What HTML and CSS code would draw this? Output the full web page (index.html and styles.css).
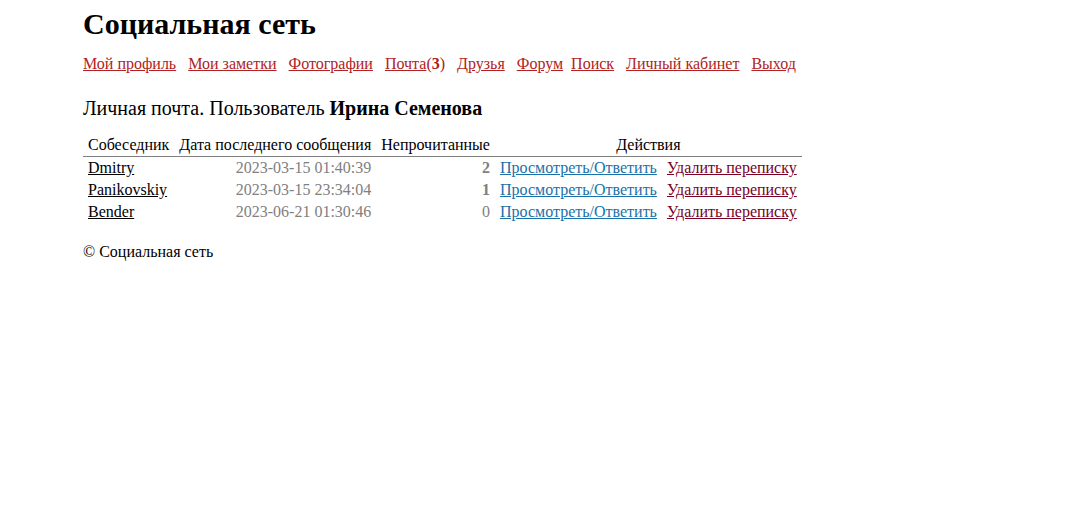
FILE: index.html
```html
<!DOCTYPE html>
<html lang="ru">
<head>
<meta charset="utf-8">
<title>Социальная сеть</title>
<link rel="stylesheet" href="styles.css">
</head>
<body>
<div class="page">
  <h1 class="title">Социальная сеть</h1>
  <nav class="menu">
    <a href="#">Мой профиль</a>
    <a href="#">Мои заметки</a>
    <a href="#">Фотографии</a>
    <span><a href="#">Почта</a>(<b>3</b>)</span>
    <a href="#">Друзья</a>
    <span class="tight"><a href="#">Форум</a><a href="#">Поиск</a></span>
    <a href="#">Личный кабинет</a>
    <a href="#">Выход</a>
  </nav>
  <h2 class="subtitle">Личная почта. Пользователь <b>Ирина Семенова</b></h2>
  <table class="mail">
    <thead>
      <tr>
        <th>Собеседник</th>
        <th>Дата последнего сообщения</th>
        <th>Непрочитанные</th>
        <th colspan="2">Действия</th>
      </tr>
    </thead>
    <tbody>
      <tr>
        <td><a class="user" href="#">Dmitry</a></td>
        <td class="date">2023-03-15 01:40:39</td>
        <td class="num"><b>2</b></td>
        <td><a class="view" href="#">Просмотреть/Ответить</a></td>
        <td><a class="del" href="#">Удалить переписку</a></td>
      </tr>
      <tr>
        <td><a class="user" href="#">Panikovskiy</a></td>
        <td class="date">2023-03-15 23:34:04</td>
        <td class="num"><b>1</b></td>
        <td><a class="view" href="#">Просмотреть/Ответить</a></td>
        <td><a class="del" href="#">Удалить переписку</a></td>
      </tr>
      <tr>
        <td><a class="user" href="#">Bender</a></td>
        <td class="date">2023-06-21 01:30:46</td>
        <td class="num">0</td>
        <td><a class="view" href="#">Просмотреть/Ответить</a></td>
        <td><a class="del" href="#">Удалить переписку</a></td>
      </tr>
    </tbody>
  </table>
  <footer class="footer">© Социальная сеть</footer>
</div>
</body>
</html>
```
FILE: styles.css
```css
body {
  margin: 0;
  font-family: "Liberation Serif", "Times New Roman", serif;
  color: #000;
  background: #fff;
}
.page {
  padding: 6px 0 0 83px;
}
.title {
  font-size: 30px;
  font-weight: bold;
  margin: 0 0 13px 0;
  line-height: 36px;
}
.menu {
  font-size: 16px;
  display: flex;
  gap: 12px;
  line-height: 18px;
}
.menu .tight { display: flex; gap: 8px; }
.menu a { color: #b22222; }
.menu b { color: #a52020; font-weight: bold; }
.menu span { color: #a52020; }
.subtitle {
  font-size: 20px;
  font-weight: normal;
  margin: 24px 0 16px 0;
  line-height: 22px;
}
.mail {
  border-collapse: collapse;
  font-size: 16px;
}
.mail th {
  font-weight: normal;
  padding: 0 5px 1px 5px;
  border-bottom: 1px solid #808080;
  line-height: 20px;
}
.mail td {
  padding: 0 5px;
  line-height: 22px;
}
.mail .date { color: #808080; text-align: right; }
.mail .num { color: #808080; text-align: right; }
.mail .num b { color: #808080; }
.user { color: #000; }
.view { color: #1a70a8; }
.del { color: #7a0026; }
.footer {
  font-size: 16px;
  margin-top: 20px;
}
```
